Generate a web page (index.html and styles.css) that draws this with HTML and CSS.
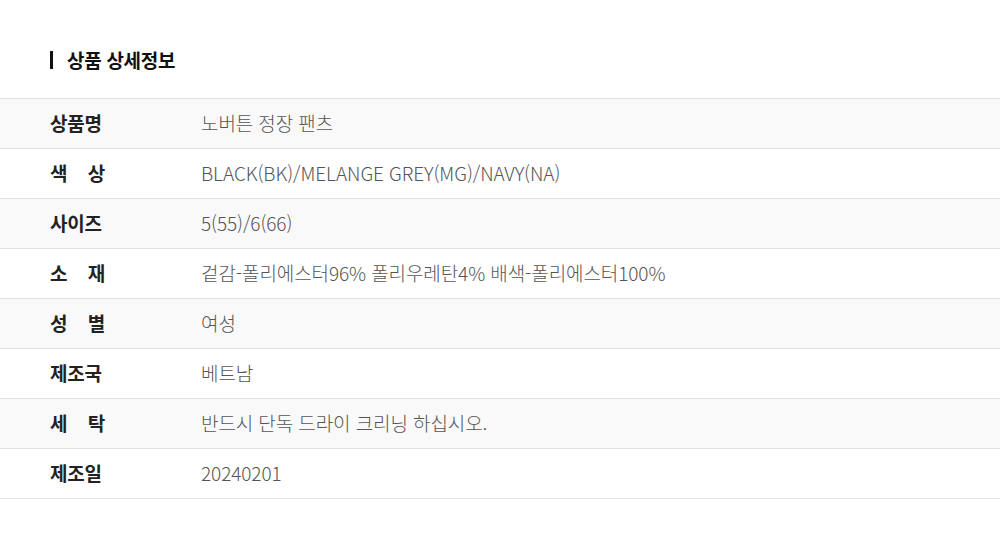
FILE: index.html
```html
<!DOCTYPE html>
<html lang="ko">
<head>
<meta charset="utf-8">
<link rel="stylesheet" href="styles.css">
</head>
<body>
<div class="wrap">
  <h2 class="title">상품 상세정보</h2>
  <div class="table">
    <div class="row odd"><div class="label">상품명</div><div class="value">노버튼 정장 팬츠</div></div>
    <div class="row"><div class="label">색&nbsp;&nbsp;&nbsp;&nbsp;상</div><div class="value">BLACK(BK)/MELANGE GREY(MG)/NAVY(NA)</div></div>
    <div class="row odd"><div class="label">사이즈</div><div class="value">5(55)/6(66)</div></div>
    <div class="row"><div class="label">소&nbsp;&nbsp;&nbsp;&nbsp;재</div><div class="value">겉감-폴리에스터96% 폴리우레탄4% 배색-폴리에스터100%</div></div>
    <div class="row odd"><div class="label">성&nbsp;&nbsp;&nbsp;&nbsp;별</div><div class="value">여성</div></div>
    <div class="row"><div class="label">제조국</div><div class="value">베트남</div></div>
    <div class="row odd"><div class="label">세&nbsp;&nbsp;&nbsp;&nbsp;탁</div><div class="value">반드시 단독 드라이 크리닝 하십시오.</div></div>
    <div class="row"><div class="label">제조일</div><div class="value">20240201</div></div>
  </div>
</div>
</body>
</html>
```
FILE: styles.css
```css
html, body {
  margin: 0;
  padding: 0;
  background: #fff;
}
body {
  font-family: "Noto Sans CJK KR", "Noto Sans", sans-serif;
  color: #222;
}
.wrap {
  padding-top: 51px;
}
.title {
  margin: 0 0 29px 50px;
  padding-left: 14px;
  border-left: 3px solid #111;
  font-size: 19px;
  font-weight: 700;
  line-height: 18px;
  height: 18px;
  letter-spacing: -0.3px;
  color: #111;
}
.table {
  border-top: 1px solid #e2e2e2;
}
.row {
  display: flex;
  align-items: center;
  height: 46px;
  padding-bottom: 3px;
  border-bottom: 1px solid #e2e2e2;
}
.row.odd {
  background: #f9f9f9;
}
.label {
  width: 151px;
  padding-left: 50px;
  font-size: 19px;
  font-weight: 700;
  color: #222;
  letter-spacing: -0.2px;
}
.value {
  font-size: 19px;
  font-weight: 300;
  color: #555;
  letter-spacing: -0.1px;
}
```
